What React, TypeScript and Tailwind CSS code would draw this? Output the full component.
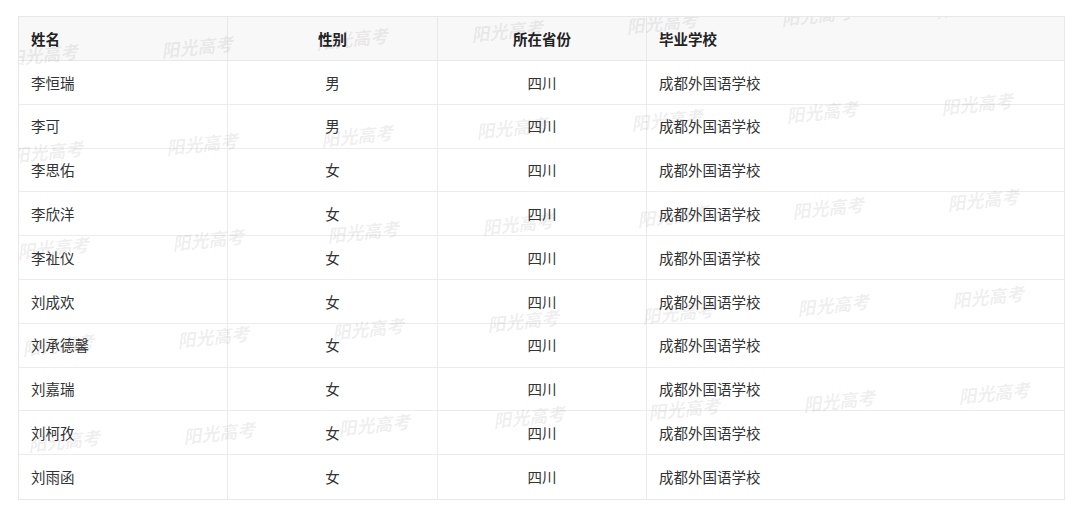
import React from 'react';

const rows = [
  { name: '李恒瑞', gender: '男' },
  { name: '李可', gender: '男' },
  { name: '李思佑', gender: '女' },
  { name: '李欣洋', gender: '女' },
  { name: '李祉仪', gender: '女' },
  { name: '刘成欢', gender: '女' },
  { name: '刘承德馨', gender: '女' },
  { name: '刘嘉瑞', gender: '女' },
  { name: '刘柯孜', gender: '女' },
  { name: '刘雨函', gender: '女' },
];

// watermark grid, page coords minus table origin (18,16)
const marks: { left: number; top: number }[] = [];
for (let r = 0; r < 5; r++) {
  for (let c = 0; c < 7; c++) {
    marks.push({
      left: 4.5 + c * 155 + r * 5.5 - 18,
      top: 53 + r * 96.5 - c * 8 - 16 - 11,
    });
  }
}

const App = () => {
  return (
    <div className="min-h-screen w-[1080px] bg-white pt-[16px] pl-[18px]" style={{ fontFamily: '"Noto Sans CJK SC", "Liberation Sans", sans-serif' }}>
      <div className="relative w-[1047px] overflow-hidden border border-[#e8e8e8] text-[14.5px] text-[#333]">
        {/* Header */}
        <div className="grid h-[44px] grid-cols-[209px_210px_209px_1fr] border-b border-[#e8e8e8] bg-[#f8f8f8] font-bold text-[#222]">
          <div className="flex items-center border-r border-[#e8e8e8] px-3">姓名</div>
          <div className="flex items-center justify-center border-r border-[#e8e8e8]">性别</div>
          <div className="flex items-center justify-center border-r border-[#e8e8e8]">所在省份</div>
          <div className="flex items-center px-3">毕业学校</div>
        </div>

        {/* Rows */}
        {rows.map((row, i) => (
          <div
            key={row.name}
            className={`grid h-[43.8px] grid-cols-[209px_210px_209px_1fr] ${i < rows.length - 1 ? 'border-b border-[#ececec]' : ''}`}
          >
            <div className="flex items-center border-r border-[#ececec] px-3">{row.name}</div>
            <div className="flex items-center justify-center border-r border-[#ececec]">{row.gender}</div>
            <div className="flex items-center justify-center border-r border-[#ececec]">四川</div>
            <div className="flex items-center px-3">成都外国语学校</div>
          </div>
        ))}

        {/* Watermark layer */}
        <div className="pointer-events-none absolute inset-0">
          {marks.map((m, i) => (
            <span
              key={i}
              className="absolute -rotate-6 whitespace-nowrap text-[18px] font-bold italic leading-[22px] text-black/[0.08]"
              style={{ left: m.left, top: m.top }}
            >
              阳光高考
            </span>
          ))}
        </div>
      </div>
    </div>
  );
};

export default App;
